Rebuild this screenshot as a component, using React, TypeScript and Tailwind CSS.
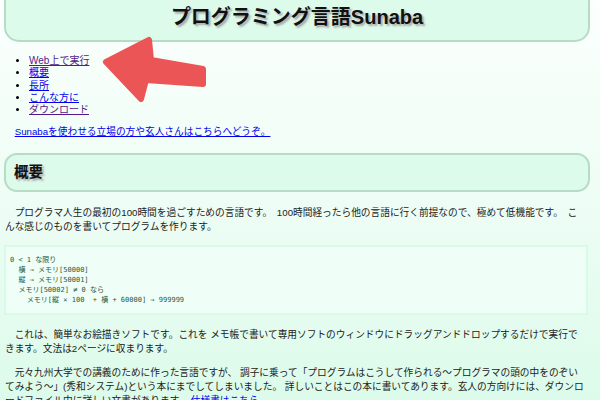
import React from 'react';

const body = '"Liberation Sans", "Noto Sans CJK JP", sans-serif';
const mono = '"DejaVu Sans Mono", "Noto Sans CJK JP", monospace';

const code = `0 < 1 な限り
  横 → メモリ[50000]
  縦 → メモリ[50001]
  メモリ[50002] ≠ 0 なら
    メモリ[縦 × 100  + 横 + 60000] → 999999`;

export default function App() {
  return (
    <div
      className="relative w-[600px] h-[400px] overflow-hidden bg-gradient-to-b from-[#fbfffd] via-[#eefdf5] to-[#dcfbea] text-[#222]"
      style={{ fontFamily: body }}
    >
      <div className="pl-[4px] pr-[10px]">
        {/* Title */}
        <div className="-mt-[20px] border-2 border-[#b6dcc5] rounded-[15px] bg-[#dcfbea] pt-[18px] pb-[6px]">
          <h1 className="h-[34px] flex items-center justify-center text-[20px] font-bold text-[#111] [text-shadow:2px_2px_2px_#a8a8a8]">
            プログラミング言語Sunaba
          </h1>
        </div>

        {/* Nav */}
        <ul className="mt-[13px] pl-[25px] list-disc text-[10px] leading-[12.3px] marker:text-black">
          <li><a href="#" className="underline text-[#551a8b]">Web上で実行</a></li>
          <li><a href="#" className="underline text-[#0000ee]">概要</a></li>
          <li><a href="#" className="underline text-[#0000ee]">長所</a></li>
          <li><a href="#" className="underline text-[#0000ee]">こんな方に</a></li>
          <li><a href="#" className="underline text-[#551a8b]">ダウンロード</a></li>
        </ul>

        <p className="mt-[9px] ml-[1px] w-[580px] indent-[9.7px] text-[9.7px] leading-[14px]">
          <a href="#" className="underline text-[#0000ee]">Sunabaを使わせる立場の方や玄人さんはこちらへどうぞ。</a>
        </p>

        {/* Section heading */}
        <div className="mt-[14px] border-2 border-[#b6dcc5] rounded-[13px] bg-[#dcfbea] px-[8px]">
          <h2 className="h-[35px] flex items-center text-[14.5px] font-bold text-[#111] [text-shadow:2px_2px_2px_#a8a8a8]">
            概要
          </h2>
        </div>

        <p className="mt-[14px] ml-[1px] w-[580px] indent-[9.7px] text-[9.7px] leading-[14px] [word-spacing:2px]">
          プログラマ人生の最初の100時間を過ごすための言語です。 100時間経ったら他の言語に行く前提なので、極めて低機能です。 こんな感じのものを書いてプログラムを作ります。
        </p>

        <pre
          className="mt-[11px] mr-[2px] border-2 border-[#d8fbe8] bg-[#effef7] pl-[4px] pt-[8px] pb-[8px] text-[7px] leading-[10px] text-[#245a3e] whitespace-pre"
          style={{ fontFamily: mono }}
        >
          {code}
        </pre>

        <p className="mt-[13px] ml-[1px] w-[580px] indent-[9.7px] text-[9.7px] leading-[14px]">
          これは、簡単なお絵描きソフトです。これを メモ帳で書いて専用ソフトのウィンドウにドラッグアンドドロップするだけで実行できます。文法は2ページに収まります。
        </p>

        <p className="mt-[10px] ml-[1px] w-[580px] indent-[9.7px] text-[9.7px] leading-[14px]">
          元々九州大学での講義のために作った言語ですが、 調子に乗って「プログラムはこうして作られる～プログラマの頭の中をのぞいてみよう～」(秀和システム)という本にまでしてしまいました。 詳しいことはこの本に書いてあります。玄人の方向けには、ダウンロードファイル中に詳しい文書があります。 <a href="#" className="underline text-[#0000ee]">仕様書はこちら</a>。
        </p>
      </div>

      {/* Red pointer arrow */}
      <svg
        className="absolute left-[96px] top-[28px] pointer-events-none"
        width="116"
        height="84"
        viewBox="96 28 116 84"
      >
        <polygon
          points="106,62 149,40 151,60 203,69 203,84 146,80 141,99"
          fill="#eb5556"
          stroke="#eb5556"
          strokeWidth="6"
          strokeLinejoin="round"
        />
      </svg>
    </div>
  );
}
